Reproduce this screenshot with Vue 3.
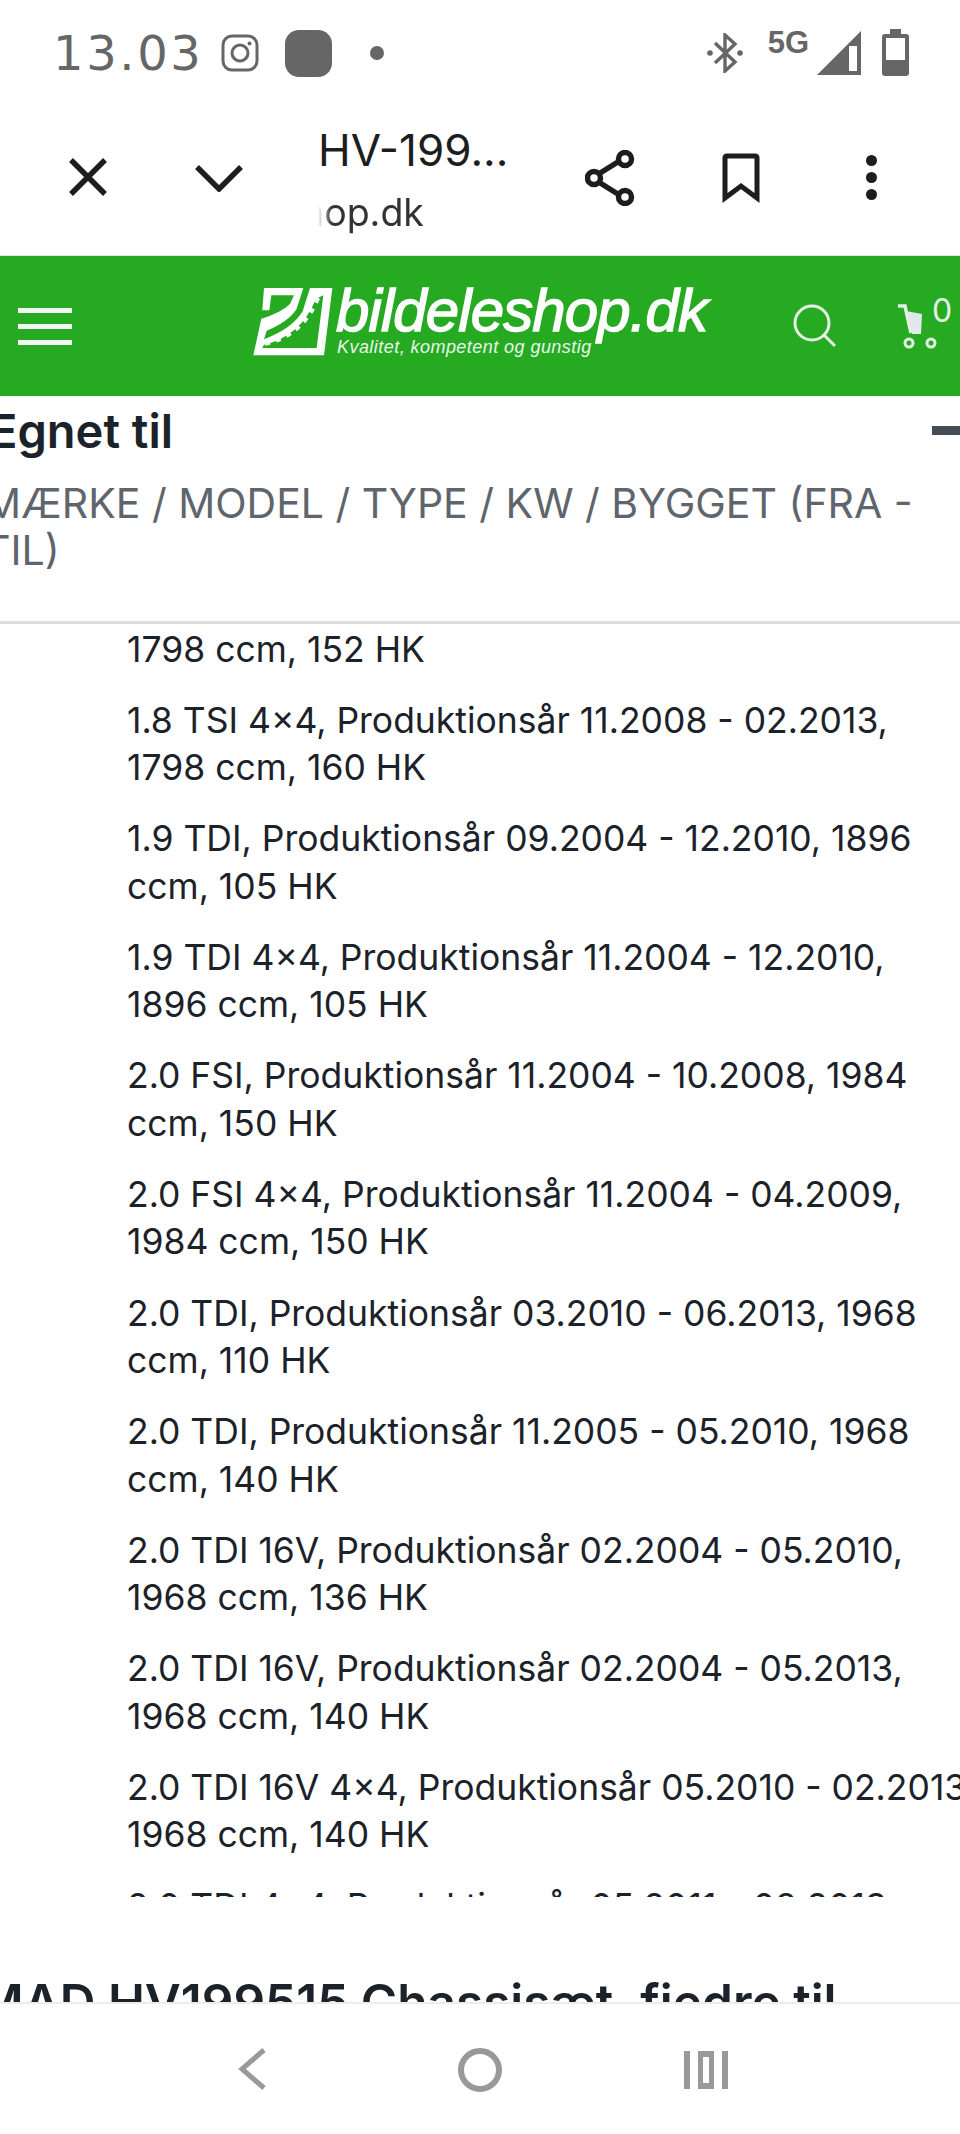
<template>
  <div class="screen">
    <div class="status-bar">
      <span class="time">13.03</span>
      <svg class="ig" viewBox="0 0 38 38" fill="none" stroke="#666" stroke-width="3">
        <rect x="2" y="2" width="34" height="34" rx="9" />
        <circle cx="19" cy="19" r="8" />
        <circle cx="28.5" cy="9.5" r="2" fill="#666" stroke="none" />
      </svg>
      <span class="app-square"></span>
      <span class="dot"></span>
      <div class="status-right">
        <svg class="bt" viewBox="0 0 36 40" fill="none" stroke="#666" stroke-width="3.4">
          <path d="M8 10 L28 29 L18 38 V2 L28 11 L8 30" />
          <circle cx="3" cy="20" r="2.8" fill="#666" stroke="none" />
          <circle cx="33" cy="20" r="2.8" fill="#666" stroke="none" />
        </svg>
        <span class="net">5G</span>
        <svg class="signal" viewBox="0 0 44 44">
          <path d="M0 44 L44 0 V44 Z" fill="#666" />
          <path d="M32 15 H40 V40 H32 Z" fill="#fff" />
        </svg>
        <svg class="battery" viewBox="0 0 27 47">
          <path d="M8 0 H19 V5 H24 Q27 5 27 8 V44 Q27 47 24 47 H3 Q0 47 0 44 V8 Q0 5 3 5 H8 Z" fill="#666" />
          <rect x="4" y="9" width="19" height="22" fill="#fff" />
        </svg>
      </div>
    </div>

    <div class="toolbar">
      <svg class="tb-close" viewBox="0 0 38 38" fill="none" stroke="#1d1d1d" stroke-width="5.5">
        <path d="M2 2 L36 36 M36 2 L2 36" />
      </svg>
      <svg class="tb-chevron" viewBox="0 0 48 28" fill="none" stroke="#1d1d1d" stroke-width="5.5">
        <path d="M2 3 L24 25 L46 3" />
      </svg>
      <div class="tb-title">
        <div class="tb-name">HV-199...</div>
        <div class="tb-url">nop.dk</div>
      </div>
      <svg class="tb-share" viewBox="0 0 50 56" fill="none" stroke="#1d1d1d" stroke-width="5.5">
        <path d="M12 25 L36 10 M12 31 L36 46" />
        <circle cx="9" cy="28" r="6.5" fill="#fff" />
        <circle cx="40" cy="9" r="6.5" fill="#fff" />
        <circle cx="40" cy="47" r="6.5" fill="#fff" />
      </svg>
      <svg class="tb-mark" viewBox="0 0 38 50" fill="none" stroke="#1d1d1d" stroke-width="5">
        <path d="M3 45 V5 Q3 3 5 3 H33 Q35 3 35 5 V45 L19 33 Z" />
      </svg>
      <div class="tb-more"><span></span><span></span><span></span></div>
    </div>

    <header class="site-header">
      <div class="burger"><span></span><span></span><span></span></div>
      <div class="logo">
        <svg class="logo-mark" viewBox="0 0 300 255">
          <path d="M60 30 H265 L240 232 H28 L52 122 Q110 105 138 78 L150 52 H82 L76 97 H55 Z" fill="#fff" />
          <path d="M178 30 H198 L176 100 Q145 152 60 184 L68 158 Q135 130 158 92 Z" fill="#25aa22" />
          <path d="M238 52 L218 210 H55 L60 200 Q170 175 216 62 Z" fill="#25aa22" />
          <path d="M222 60 Q175 175 58 198" fill="none" stroke="#fff" stroke-width="13" stroke-dasharray="15 19" />
        </svg>
        <div class="logo-text">
          <span class="brand">bildeleshop.dk</span>
          <span class="tagline">Kvalitet, kompetent og gunstig</span>
        </div>
      </div>
      <svg class="search" viewBox="0 0 44 44" fill="none" stroke="#e6f2e6" stroke-width="3">
        <circle cx="19" cy="19" r="17" />
        <path d="M31 31 L42 42" />
      </svg>
      <div class="cart">
        <svg class="cart-icon" viewBox="0 0 42 46">
          <path d="M1 3 H8 L14 30" fill="none" stroke="#e6f2e6" stroke-width="3.5" />
          <path d="M9 8 L25 11 L24 31 L15 31 Z" fill="#e3e8ea" />
          <circle cx="12" cy="40" r="4" fill="none" stroke="#e6f2e6" stroke-width="3" />
          <circle cx="34" cy="40" r="4" fill="none" stroke="#e6f2e6" stroke-width="3" />
        </svg>
        <span class="cart-count">0</span>
      </div>
    </header>

    <main class="content">
      <section class="fits">
        <div class="fits-head">
          <h2>Egnet til</h2>
          <span class="minus"></span>
        </div>
        <p class="fits-sub">MÆRKE / MODEL / TYPE / KW / BYGGET (FRA - TIL)</p>
      </section>
      <div class="scroller">
        <ul class="types">
          <li v-for="t in types" :key="t">{{ t }}</li>
        </ul>
      </div>
      <h2 class="next-title">MAD HV199515 Chassisæt, fjedre til</h2>
    </main>

    <nav class="nav-bar">
      <svg class="nav-back" viewBox="0 0 28 42" fill="none" stroke="#999" stroke-width="5">
        <path d="M26 2 L4 21 L26 40" />
      </svg>
      <svg class="nav-home" viewBox="0 0 44 44" fill="none" stroke="#999" stroke-width="6">
        <circle cx="22" cy="22" r="19" />
      </svg>
      <svg class="nav-recent" viewBox="0 0 44 38" fill="#999">
        <path d="M0 0 H6 V38 H0 Z M38 0 H44 V38 H38 Z" />
        <path d="M14 0 H30 V38 H14 Z M19 6 V32 H25 V6 Z" fill-rule="evenodd" />
      </svg>
    </nav>
  </div>
</template>

<script setup>
const types = [
  '1.8 TSI 4×4, Produktionsår 11.2008 - 02.2013, 1798\u00a0ccm, 160 HK',
  '1.9 TDI, Produktionsår 09.2004 - 12.2010, 1896 ccm, 105 HK',
  '1.9 TDI 4×4, Produktionsår 11.2004 - 12.2010, 1896\u00a0ccm, 105 HK',
  '2.0 FSI, Produktionsår 11.2004 - 10.2008, 1984 ccm, 150 HK',
  '2.0 FSI 4×4, Produktionsår 11.2004 - 04.2009, 1984 ccm, 150 HK',
  '2.0 TDI, Produktionsår 03.2010 - 06.2013, 1968 ccm, 110 HK',
  '2.0 TDI, Produktionsår 11.2005 - 05.2010, 1968 ccm, 140 HK',
  '2.0 TDI 16V, Produktionsår 02.2004 - 05.2010, 1968 ccm, 136 HK',
  '2.0 TDI 16V, Produktionsår 02.2004 - 05.2013, 1968 ccm, 140 HK',
  '2.0 TDI 16V 4×4, Produktionsår 05.2010 - 02.2013, 1968 ccm, 140 HK',
  '2.0 TDI 4×4, Produktionsår 05.2011 - 08.2013, 1968 ccm, 140 HK',
]
</script>

<style scoped>
.screen {
  width: 960px;
  height: 2134px;
  display: flex;
  flex-direction: column;
  overflow: hidden;
  background: #fff;
  font-family: Inter, "Liberation Sans", sans-serif;
  color: #1c2229;
}

/* status bar */
.status-bar {
  height: 100px;
  flex-shrink: 0;
  display: flex;
  align-items: flex-start;
  padding: 0 51px 0 53px;
  box-sizing: border-box;
  color: #666;
}

.time {
  margin-top: 21px;
  font-family: "DejaVu Sans", sans-serif;
  font-size: 48px;
  line-height: 64px;
  letter-spacing: 2.6px;
}

.ig {
  width: 38px;
  height: 38px;
  margin: 34px 0 0 18px;
}

.app-square {
  width: 47px;
  height: 47px;
  margin: 30px 0 0 26px;
  background: #666;
  border-radius: 14px;
}

.dot {
  width: 14px;
  height: 14px;
  margin: 46px 0 0 38px;
  background: #666;
  border-radius: 50%;
}

.status-right {
  margin-left: auto;
  display: flex;
  align-items: flex-start;
}

.bt {
  width: 36px;
  height: 40px;
  margin-top: 33px;
}

.net {
  margin: 24px 8px 0 25px;
  font-family: "Liberation Sans", sans-serif;
  font-weight: 700;
  font-size: 31px;
  line-height: 38px;
}

.signal {
  width: 44px;
  height: 44px;
  margin-top: 31px;
}

.battery {
  width: 27px;
  height: 47px;
  margin: 29px 0 0 21px;
}

/* browser toolbar */
.toolbar {
  height: 155px;
  flex-shrink: 0;
  display: flex;
  align-items: center;
  border-bottom: 1px solid #dfe8df;
  padding-left: 69px;
}

.tb-close {
  width: 38px;
  height: 38px;
  margin-top: -2px;
}

.tb-chevron {
  width: 48px;
  height: 28px;
  margin: 0 0 0 88px;
}

.tb-title {
  width: 200px;
  margin-left: 75px;
  margin-top: 4px;
}

.tb-name {
  font-size: 44px;
  line-height: 56px;
  color: #1d1d1d;
  white-space: nowrap;
}

.tb-url {
  width: 112px;
  height: 50px;
  margin-top: 10px;
  overflow: hidden;
  font-size: 37.5px;
  line-height: 50px;
  text-indent: -16px;
  color: #333;
  -webkit-mask-image: linear-gradient(90deg, transparent 0, #000 14px);
  mask-image: linear-gradient(90deg, transparent 0, #000 14px);
}

.tb-share {
  width: 50px;
  height: 56px;
  margin-left: 67px;
}

.tb-mark {
  width: 38px;
  height: 50px;
  margin-left: 87px;
}

.tb-more {
  margin-left: 106px;
  display: flex;
  flex-direction: column;
  gap: 6px;
}

.tb-more span {
  width: 11px;
  height: 11px;
  background: #1d1d1d;
  border-radius: 50%;
}

/* site header */
.site-header {
  height: 140px;
  flex-shrink: 0;
  display: flex;
  align-items: center;
  background: #25aa22;
  padding-left: 18px;
}

.burger {
  width: 54px;
  display: flex;
  flex-direction: column;
  gap: 11px;
}

.burger span {
  height: 5px;
  background: #f1f7f1;
}

.logo {
  display: flex;
  align-items: flex-start;
  margin-left: 172px;
  margin-top: -4px;
}

.logo-mark {
  width: 100px;
  height: 85px;
  margin: -8px -8px 0 0;
}

.logo-text {
  display: flex;
  flex-direction: column;
}

.brand {
  font-family: "Liberation Sans", sans-serif;
  font-style: italic;
  font-size: 60px;
  line-height: 50px;
  letter-spacing: -0.9px;
  -webkit-text-stroke: 1.4px #fff;
  color: #fff;
}

.tagline {
  margin: 0 0 0 1px;
  font-family: "Liberation Sans", sans-serif;
  font-style: italic;
  font-size: 18px;
  line-height: 22px;
  letter-spacing: 0.45px;
  color: #eaf5ea;
  white-space: nowrap;
}

.search {
  width: 44px;
  height: 44px;
  margin-left: 86px;
}

.cart {
  display: flex;
  align-items: flex-start;
  margin-left: 60px;
}

.cart-icon {
  width: 42px;
  height: 46px;
}

.cart-count {
  margin: -10px 0 0 -7px;
  font-size: 32px;
  line-height: 36px;
  color: #e6f2e6;
}

/* content */
.content {
  flex: 1;
  min-height: 0;
  overflow: hidden;
}

.fits {
  height: 228px;
  box-sizing: border-box;
  border-bottom: 3px solid #dedede;
  padding-top: 7px;
}

.fits-head {
  display: flex;
  align-items: center;
  justify-content: space-between;
}

h2 {
  margin: 0;
  font-weight: 600;
  font-size: 47px;
  line-height: 56px;
  white-space: nowrap;
}

.fits-head h2 {
  margin-left: -11px;
}

.minus {
  width: 28px;
  height: 9px;
  margin-top: -1px;
  background: #444c55;
}

.fits-sub {
  width: 950px;
  margin: 21px 0 0 -16px;
  font-size: 41px;
  line-height: 47px;
  color: #5e656c;
}

.scroller {
  height: 1273px;
  overflow: hidden;
  position: relative;
}

.types {
  margin: 0;
  padding: 1.5px 0 0;
  list-style: none;
  position: relative;
}

.types::before {
  content: "1798 ccm, 152 HK";
  display: block;
  margin: 0 0 23.6px 127px;
  font-size: 35.5px;
  line-height: 47.5px;
}

.types li {
  width: 852px;
  margin: 0 0 23.6px 127px;
  font-size: 35.5px;
  line-height: 47.5px;
}

.next-title {
  margin: 77px 0 0 -22px;
  font-size: 49.5px;
}

/* android nav */
.nav-bar {
  height: 132px;
  flex-shrink: 0;
  display: flex;
  align-items: flex-start;
  box-sizing: border-box;
  border-top: 2px solid #ececec;
  background: #fff;
  padding: 44px 0 0 238px;
}

.nav-back {
  width: 28px;
  height: 42px;
}

.nav-home {
  width: 44px;
  height: 44px;
  margin-left: 192px;
}

.nav-recent {
  width: 44px;
  height: 38px;
  margin: 3px 0 0 182px;
}
</style>
